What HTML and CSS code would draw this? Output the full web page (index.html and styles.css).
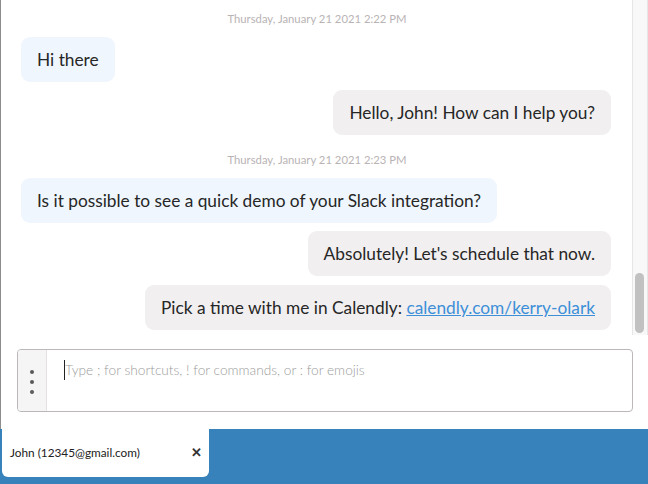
FILE: index.html
```html
<!DOCTYPE html>
<html lang="en">
<head>
  <meta charset="UTF-8" />
  <title>Chat</title>
  <link rel="stylesheet" href="styles.css">
</head>
<body>

  <div class="widget">
    <div class="conversation">
      <div class="thread">
        <div class="stamp">Thursday, January 21 2021 2:22 PM</div>
        <div class="bubble visitor">Hi there</div>
        <div class="bubble operator">Hello, John! How can I help you?</div>

        <div class="stamp">Thursday, January 21 2021 2:23 PM</div>
        <div class="bubble visitor">Is it possible to see a quick demo of your Slack integration?</div>
        <div class="bubble operator">Absolutely! Let's schedule that now.</div>
        <div class="bubble operator">Pick a time with me in Calendly: <a href="#">calendly.com/kerry-olark</a></div>
      </div>
      <div class="scrollbar"><div class="thumb"></div></div>
    </div>

    <!-- zone de saisie -->
    <div class="composer">
      <div class="composer-box">
        <div class="gutter">
          <span class="dot"></span>
          <span class="dot"></span>
          <span class="dot"></span>
        </div>
        <div class="field">
          <span class="caret"></span>
          <span class="placeholder">Type ; for shortcuts, ! for commands, or : for emojis</span>
        </div>
      </div>
    </div>
  </div>

  <div class="tabs">
    <div class="tab">
      <span>John (12345@gmail.com)</span>
      <span class="close">&#x2715;</span>
    </div>
  </div>

</body>
</html>
```

FILE: styles.css
```css
body {
  margin: 0;
  font-family: Lato, "Open Sans", sans-serif;
  color: #262626;
  background: #ffffff;
  width: 648px;
  height: 484px;
  overflow: hidden;
}

.widget {
  height: 429px;
  border-left: 1px solid #8d8d8d;
  display: flex;
  flex-direction: column;
  box-sizing: border-box;
}

.conversation {
  height: 335px;
  display: flex;
}

.thread {
  flex: 1;
  padding: 12px 21px 0 20px;
  display: flex;
  flex-direction: column;
  align-items: flex-start;
  overflow: hidden;
}

.stamp {
  align-self: center;
  font-size: 11.3px;
  line-height: 14px;
  color: #b9b3b5;
  margin-bottom: 11px;
  margin-left: 2px;
}

.bubble + .stamp {
  margin-top: 10px;
}

.bubble {
  font-size: 17.3px;
  line-height: 21px;
  padding: 12px 16px;
  border-radius: 9px;
  margin-bottom: 8px;
}

.bubble.visitor {
  background: #eff6fd;
}

.bubble.operator {
  align-self: flex-end;
  background: #f1eff0;
}

.bubble + .bubble.operator:last-child {
  margin-top: 1px;
}

.bubble a {
  color: #3d8fd8;
}

.scrollbar {
  width: 14px;
  background: #f8f8f8;
  border-left: 1px solid #e6e6e6;
  border-right: 1px solid #e6e6e6;
}

.thumb {
  margin: 273px 0 0 2px;
  width: 9px;
  height: 60px;
  border-radius: 5px;
  background: #c1c1c1;
}

.composer {
  flex: 1;
  padding: 14px 15px 17px 16px;
}

.composer-box {
  height: 100%;
  box-sizing: border-box;
  border: 1px solid #bcb7b9;
  border-radius: 4px;
  display: flex;
  overflow: hidden;
}

.gutter {
  width: 28px;
  background: #f5f5f5;
  border-right: 1px solid #e6e1e2;
  display: flex;
  flex-direction: column;
  align-items: center;
  justify-content: center;
  gap: 6px;
  padding-top: 3px;
}

.dot {
  width: 4px;
  height: 4px;
  border-radius: 50%;
  background: #5a5a5a;
}

.field {
  flex: 1;
  padding: 11px 0 0 17px;
  display: flex;
  align-items: flex-start;
}

.caret {
  width: 1px;
  height: 20px;
  background: #222;
  margin-top: -1px;
}

.placeholder {
  font-size: 13.7px;
  font-weight: 300;
  line-height: 18px;
  color: #9c9c9c;
}

.tabs {
  height: 55px;
  background: #3882bc;
  padding-left: 2px;
}

.tab {
  width: 207px;
  height: 48px;
  box-sizing: border-box;
  background: #ffffff;
  border-radius: 0 0 6px 6px;
  display: flex;
  align-items: center;
  justify-content: space-between;
  padding: 0 7px 2px 8px;
  font-size: 11.8px;
  color: #222;
}

.close {
  font-size: 13px;
  font-weight: bold;
  color: #333;
}
```
